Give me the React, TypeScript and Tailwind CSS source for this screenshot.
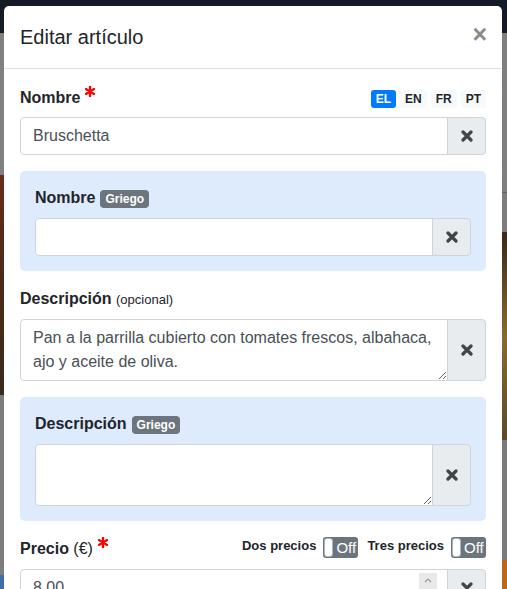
import React from "react";

const XIcon = () => (
  <svg width="12" height="12" viewBox="0 0 12 12" aria-hidden="true">
    <path d="M2 2 L10 10 M10 2 L2 10" stroke="#3f454b" strokeWidth="3.2" strokeLinecap="round" />
  </svg>
);

const ClearBtn = ({ className = "" }: { className?: string }) => (
  <div
    className={
      "w-[39px] shrink-0 flex items-center justify-center bg-[#e9ecef] border border-[#ced4da] rounded-r-[4px] " +
      className
    }
  >
    <XIcon />
  </div>
);

const Badge = ({ children }: { children: React.ReactNode }) => (
  <span className="inline-block ml-[5px] bg-[#6c757d] text-white text-[12px] font-bold leading-[12px] px-[5px] py-[3px] rounded-[4px] align-baseline">
    {children}
  </span>
);

const Req = () => (
  <svg
    width="10"
    height="11"
    viewBox="0 0 10 11"
    className="inline-block ml-[5px] relative top-[-7px]"
    aria-hidden="true"
  >
    <path
      d="M5 0.8 V10.2 M0.9 3.1 L9.1 7.9 M9.1 3.1 L0.9 7.9"
      stroke="#ff0000"
      strokeWidth="2.3"
      strokeLinecap="round"
    />
  </svg>
);

const Toggle = () => (
  <div className="w-[35px] h-[21px] bg-[#6c757d] rounded-[3px] flex items-center p-[1px]">
    <div className="w-[9px] h-[19px] bg-white rounded-[3px] border border-[#adb5bd]" />
    <span className="text-white text-[15px] leading-none ml-[3px]">Off</span>
  </div>
);

export default function App() {
  return (
    <div
      className="relative w-full h-[589px] overflow-hidden"
      style={{ fontFamily: '"Liberation Sans", Arial, sans-serif' }}
    >
      {/* page behind the modal */}
      <div className="flex flex-col h-full">
        <div className="h-[33px] bg-[#141b27]" />
        <div className="flex-1 flex justify-between bg-[#7f7f7f]">
          <div className="w-[4px] flex flex-col">
            <div className="h-[142px] bg-[#808080]" />
            <div className="h-[220px] bg-gradient-to-b from-[#6b2a1c] via-[#4a2a18] to-[#3a2a1c]" />
            <div className="h-[180px] bg-[#7d7d7d]" />
            <div className="flex-1 bg-[#3f6ea6]" />
          </div>
          <div className="w-[5px] flex flex-col">
            <div className="h-[159px] bg-[#7f7f7f]" />
            <div className="h-[1px] bg-[#5f5f5f]" />
            <div className="h-[39px] bg-[#7d7d7d]" />
            <div className="h-[208px] bg-gradient-to-b from-[#3a2a18] via-[#8a6a30] to-[#5a4a2a]" />
            <div className="h-[120px] bg-[#7a7a7a]" />
            <div className="flex-1 bg-[#b8691a]" />
          </div>
        </div>
      </div>

      {/* modal */}
      <div className="absolute top-[6px] left-[4px] right-[5px] bg-white rounded-[5px] text-[#212529]">
        <div className="flex items-center justify-between px-[16px] py-[16px] border-b border-[#dee2e6] h-[63px]">
          <h5 className="text-[20px] leading-[30px] font-normal">Editar artículo</h5>
          <span className="text-[25px] font-bold leading-none text-[#8a8a8a] mr-[-1px] mt-[-5px]">×</span>
        </div>

        <div className="p-[16px]">
          {/* Nombre */}
          <div className="flex items-center justify-between h-[24px] mb-[8px]">
            <label className="text-[16px] font-bold leading-[24px] mt-[1px]">
              Nombre<Req />
            </label>
            <div className="flex gap-[4px] mt-[3px]">
              <span className="bg-[#007bff] text-white text-[12px] font-bold leading-[18px] h-[18px] px-[5px] rounded-[3px]">EL</span>
              <span className="bg-[#f8f9fa] text-[#212529] text-[12px] font-bold leading-[18px] h-[18px] px-[5px] rounded-[3px]">EN</span>
              <span className="bg-[#f8f9fa] text-[#212529] text-[12px] font-bold leading-[18px] h-[18px] px-[5px] rounded-[3px]">FR</span>
              <span className="bg-[#f8f9fa] text-[#212529] text-[12px] font-bold leading-[18px] h-[18px] px-[5px] rounded-[3px]">PT</span>
            </div>
          </div>
          <div className="flex h-[38px]">
            <input
              readOnly
              value="Bruschetta"
              className="flex-1 min-w-0 border border-[#ced4da] rounded-l-[4px] px-[12px] text-[16px] text-[#495057] outline-none"
            />
            <ClearBtn className="-ml-[1px]" />
          </div>

          {/* Nombre Griego */}
          <div className="mt-[16px] bg-[#deebfc] rounded-[5px] p-[15px]">
            <label className="block h-[24px] text-[16px] font-bold leading-[24px] mb-[8px]">
              Nombre<Badge>Griego</Badge>
            </label>
            <div className="flex h-[38px]">
              <input
                readOnly
                value=""
                className="flex-1 min-w-0 bg-white border border-[#ced4da] rounded-l-[4px] px-[12px] text-[16px] outline-none"
              />
              <ClearBtn className="-ml-[1px]" />
            </div>
          </div>

          {/* Descripción */}
          <label className="block h-[24px] mt-[16px] text-[16px] font-bold leading-[24px] mb-[8px]">
            Descripción <span className="font-normal text-[13px]">(opcional)</span>
          </label>
          <div className="flex h-[62px]">
            <textarea
              readOnly
              defaultValue="Pan a la parrilla cubierto con tomates frescos, albahaca, ajo y aceite de oliva."
              className="flex-1 min-w-0 border border-[#ced4da] rounded-l-[4px] px-[12px] py-[6px] text-[16px] leading-[24px] text-[#495057] outline-none resize-y"
            />
            <ClearBtn className="-ml-[1px]" />
          </div>

          {/* Descripción Griego */}
          <div className="mt-[16px] bg-[#deebfc] rounded-[5px] p-[15px]">
            <label className="block h-[24px] text-[16px] font-bold leading-[24px] mb-[8px]">
              Descripción<Badge>Griego</Badge>
            </label>
            <div className="flex h-[62px]">
              <textarea
                readOnly
                defaultValue=""
                className="flex-1 min-w-0 bg-white border border-[#ced4da] rounded-l-[4px] px-[12px] py-[6px] text-[16px] leading-[24px] outline-none resize-y"
              />
              <ClearBtn className="-ml-[1px]" />
            </div>
          </div>

          {/* Precio */}
          <div className="mt-[16px] flex items-start justify-between h-[24px] mb-[8px]">
            <label className="text-[16px] font-bold leading-[24px] mt-[0px]">
              Precio <span className="font-normal">(€)</span>
              <Req />
            </label>
            <div className="flex items-center">
              <span className="text-[13px] font-bold mr-[7px] mt-[-3px]">Dos precios</span>
              <Toggle />
              <span className="text-[13px] font-bold ml-[9px] mr-[7px] mt-[-3px]">Tres precios</span>
              <Toggle />
            </div>
          </div>
          <div className="flex h-[38px]">
            <div className="flex-1 flex items-center border border-[#ced4da] rounded-l-[4px] pl-[12px] pr-[10px]">
              <span className="flex-1 text-[16px] text-[#495057]">8.00</span>
              <div className="w-[18px] h-[30px] flex flex-col">
                <div className="h-[15px] bg-[#e9e9ea] flex items-center justify-center">
                  <svg width="8" height="5" viewBox="0 0 8 5"><path d="M1 4 L4 1 L7 4" stroke="#9a9a9a" strokeWidth="1.2" fill="none" /></svg>
                </div>
                <div className="h-[15px] bg-[#e9e9ea] flex items-center justify-center">
                  <svg width="8" height="5" viewBox="0 0 8 5"><path d="M1 1 L4 4 L7 1" stroke="#9a9a9a" strokeWidth="1.2" fill="none" /></svg>
                </div>
              </div>
            </div>
            <ClearBtn className="-ml-[1px]" />
          </div>
        </div>
      </div>
    </div>
  );
}
